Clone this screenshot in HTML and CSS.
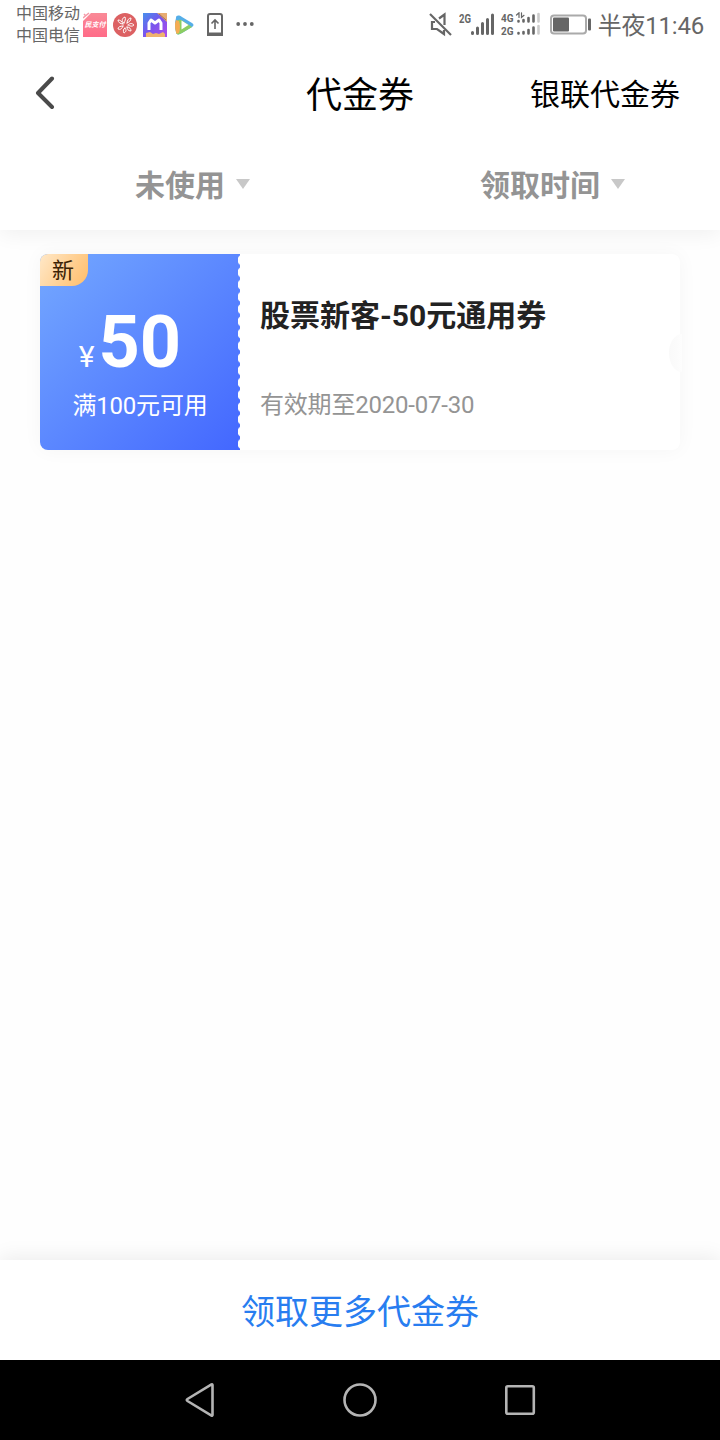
FILE: index.html
```html
<!DOCTYPE html>
<html lang="zh-CN">
<head>
  <meta charset="UTF-8">
  <title>代金券</title>
  <link rel="stylesheet" href="styles.css">
</head>
<body>
  <div class="screen">
    <!-- 状态栏 -->
    <div class="status-bar">
      <div class="carriers">
        <span>中国移动</span>
        <span>中国电信</span>
      </div>
      <div class="notices">
        <svg width="24" height="26" viewBox="0 0 24 26">
          <defs>
            <linearGradient id="pink" x1="0" y1="0" x2="0" y2="1">
              <stop offset="0" stop-color="#f98a97"></stop>
              <stop offset="1" stop-color="#ff6b88"></stop>
            </linearGradient>
          </defs>
          <path d="M8 1H24V25H0V9Z" fill="url(#pink)"></path>
          <path d="M0 6L6 1M1 2l2 2" stroke="#f59aa8" stroke-width="1.5"></path>
          <text class="pay-text" x="12" y="15" text-anchor="middle">民支付</text>
        </svg>
        <svg width="24" height="26" viewBox="0 0 24 26">
          <circle cx="12" cy="13" r="12" fill="#dc6163"></circle>
          <g fill="none" stroke="#fff" stroke-width="1" stroke-linecap="round">
            <path d="M11 11C8 9 9 6 12 5C13 7 12 9 11 11M14 11C14 8 16 6 18 6C18 9 16 10 14 11M15 13C17 11 19 11 21 13C19 15 17 14 15 13M14 15C17 15 18 17 18 19C15 19 14 17 14 15M12 16C14 18 13 20 11 21C10 19 10 17 12 16M10 14C9 17 7 18 5 17C5 15 7 14 10 14M10 12C7 12 5 10 5 8C7 8 9 9 10 12"></path>
          </g>
        </svg>
        <svg width="24" height="26" viewBox="0 0 24 26">
          <defs>
            <linearGradient id="violet" x1="0" y1="0" x2="1" y2="1">
              <stop offset="0" stop-color="#4790ec"></stop>
              <stop offset=".45" stop-color="#7656ed"></stop>
              <stop offset="1" stop-color="#b14bea"></stop>
            </linearGradient>
          </defs>
          <path d="M0 1H24V25H0Z" fill="url(#violet)"></path>
          <path d="M14 1H24V10Z" fill="#e8ad72"></path>
          <path d="M16 2l7 6" stroke="#a36d62"></path>
          <path d="M6 18V11L8 8L12 11L16 8L18 11V18" fill="none" stroke="#fff" stroke-width="3" stroke-linejoin="round"></path>
          <path d="M3 25v-4l4-1 3 2 3-1 3 1 4-2 2 2v3z" fill="#efb36d"></path>
        </svg>
        <svg class="player" width="20" height="20" viewBox="0 0 20 20">
          <path d="M1 3C1 0 4 0 7 2L17 8Q20 10 17 12L7 18C4 20 1 20 1 17Q-1 10 1 3Z" fill="#55aee8"></path>
          <path d="M3 5Q5 4 8 6L14 10L17 12L7 18C4 20 1 20 1 17Q0 10 3 5Z" fill="#8cce61"></path>
          <path d="M1 5L4 6Q6 12 4 18Q1 20 1 17Q-1 10 1 5Z" fill="#f5ad52"></path>
          <path d="M6.500 5.500L13.500 10L6.500 14.500Z" fill="#fff"></path>
        </svg>
        <svg width="16" height="24" viewBox="0 0 16 24">
          <path d="M3 1H13Q15 1 15 3V22H1V3Q1 1 3 1Z" fill="none" stroke="#666" stroke-width="2"></path>
          <path d="M1 21H15" stroke="#666" stroke-width="3"></path>
          <path d="M8 16V7M4.500 10.500L8 7L11.500 10.500" fill="none" stroke="#666" stroke-width="1.6"></path>
        </svg>
        <svg class="dots" width="20" height="4" viewBox="0 0 20 4">
          <circle cx="3.2" cy="2" r="1.9"></circle>
          <circle cx="10" cy="2" r="1.9"></circle>
          <circle cx="16.8" cy="2" r="1.9"></circle>
        </svg>
      </div>
      <div class="system">
        <svg width="24" height="26" viewBox="0 0 24 26">
          <path d="M6 10H3V17H8L15 22V18M10 6.500L15.500 2.500V13" fill="none" stroke="#666" stroke-width="2.2"></path>
          <path d="M1 2L22 23" stroke="#666" stroke-width="2.2"></path>
        </svg>
        <svg class="signal" width="36" height="26" viewBox="0 0 36 26">
          <text x="0" y="10.500" textLength="12" lengthAdjust="spacingAndGlyphs">2G</text>
          <path d="M13.500 20.500v1M18.500 16v5.500M23.500 11.500v10M28.500 7.500v14M33.500 3v18.500"></path>
        </svg>
        <svg class="signal double" width="39" height="26" viewBox="0 0 39 26">
          <text x="0" y="10" textLength="12.500" lengthAdjust="spacingAndGlyphs">4G</text>
          <text x="0" y="22.500" textLength="12.500" lengthAdjust="spacingAndGlyphs">2G</text>
          <path class="thin" d="M17.500 9v.5M22.500 8v1.500M27.500 6v3.500M32.500 3.500v6M17.500 21v.5M22.500 20v1.500M27.500 18v3.500M32.500 15.500v6"></path>
          <path class="arrows" d="M15.500 3L18 .8V5.500M20.500 .8V5.500L23 3.300"></path>
          <path class="thin faint" d="M37.500 2v7.500M37.500 14v7.500"></path>
        </svg>
        <svg class="battery" width="42" height="22" viewBox="0 0 42 22">
          <rect x="1" y="1.500" width="35" height="18" rx="3" fill="none" stroke="#aaa" stroke-width="2"></rect>
          <rect x="3" y="3.500" width="16" height="14" rx="1" fill="#666"></rect>
          <rect x="38" y="4.500" width="3" height="12" rx="1" fill="#666"></rect>
        </svg>
        <span class="clock">半夜11:46</span>
      </div>
    </div>

    <!-- 标题栏 -->
    <div class="top">
      <div class="nav">
        <svg class="back" width="20" height="34" viewBox="0 0 20 34">
          <path d="M17 2.500L3 17L17 31" fill="none" stroke="#4a4a4a" stroke-width="4" stroke-linecap="round" stroke-linejoin="round"></path>
        </svg>
        <h1 class="title">代金券</h1>
        <span class="nav-link">银联代金券</span>
      </div>
      <div class="filters">
        <div class="filter"><span>未使用</span><i class="caret"></i></div>
        <div class="filter"><span>领取时间</span><i class="caret"></i></div>
      </div>
    </div>

    <!-- 券列表 -->
    <div class="list">
      <div class="coupon">
        <div class="amount">
          <span class="badge">新</span>
          <div class="price"><span class="yen">¥</span><span class="num">50</span></div>
          <div class="limit">满100元可用</div>
        </div>
        <div class="info">
          <h2 class="name">股票新客-50元通用券</h2>
          <div class="date">有效期至2020-07-30</div>
          <i class="notch"></i>
        </div>
      </div>
    </div>

    <div class="more">领取更多代金券</div>

    <!-- 系统导航键 -->
    <div class="keys">
      <svg width="40" height="40" viewBox="0 0 40 40"><path d="M32.500 5V35Q32.500 36 31.500 35.500L7.500 21Q6 20 7.500 19L31.500 4.500Q32.500 4 32.500 5Z"></path></svg>
      <svg width="40" height="40" viewBox="0 0 40 40"><circle cx="20" cy="20" r="15.500"></circle></svg>
      <svg width="40" height="40" viewBox="0 0 40 40"><rect x="6.300" y="6.300" width="27.500" height="27.500" rx="1.500"></rect></svg>
    </div>
  </div>
</body>
</html>
```
FILE: styles.css
```css
body {
  margin: 0;
  font-family: Roboto, "Noto Sans CJK SC", sans-serif;
  background: #fefefe;
}
svg {
  display: block;
  flex: none;
}
.screen {
  display: flex;
  flex-direction: column;
  width: 720px;
  height: 1440px;
  overflow: hidden;
}

/* 状态栏 */
.status-bar {
  position: relative;
  z-index: 1;
  display: flex;
  align-items: center;
  height: 50px;
  padding: 0 16px;
  background: #fff;
  color: #666;
}
.carriers {
  display: flex;
  flex-direction: column;
  width: 67px;
  font-size: 16px;
  line-height: 22px;
  white-space: nowrap;
}
.notices {
  display: flex;
  align-items: center;
  gap: 6px;
}
.pay-text {
  font-size: 7px;
  font-weight: bold;
  font-style: italic;
  fill: #fff;
}
.player {
  margin: 0 6px 0 2px;
}
.dots {
  margin: -2px 0 0 6px;
  fill: #666;
}
.system {
  display: flex;
  align-items: center;
  margin-left: auto;
}
.signal {
  margin-left: 6px;
  font-size: 12.5px;
  font-weight: bold;
  fill: #666;
}
.signal.double {
  font-size: 10.2px;
}
.signal path {
  fill: none;
  stroke: #666;
  stroke-width: 3;
  stroke-linecap: round;
}
.signal .thin {
  stroke-width: 2.6;
}
.signal .arrows {
  stroke-width: 1.2;
}
.signal .faint {
  stroke: #ccc;
}
.battery {
  margin: 0 6px 0 10px;
}
.clock {
  font-size: 24px;
  line-height: 48px;
  letter-spacing: -0.2px;
  padding-top: 1px;
}

/* 标题栏和筛选 */
.top {
  height: 180px;
  background: #fff;
  box-shadow: 0 4px 20px rgba(0, 0, 0, 0.06);
}
.nav {
  display: grid;
  grid-template-columns: 1fr auto 1fr;
  align-items: center;
  height: 86px;
  padding: 0 40px 0 35px;
}
.title {
  margin: 0;
  padding: 0 0 2px 5px;
  font-size: 36px;
  font-weight: normal;
}
.nav-link {
  justify-self: end;
  padding-bottom: 3px;
  font-size: 30px;
}
.filters {
  display: flex;
  height: 96px;
}
.filter {
  display: flex;
  flex: 1;
  align-items: center;
  justify-content: center;
  gap: 11px;
  padding-left: 25px;
  font-size: 30px;
  font-weight: bold;
  color: #949494;
}
.filter span {
  padding-bottom: 3px;
}
.filter .caret {
  border: 7px solid transparent;
  border-top: 10px solid #c8c8c8;
  border-bottom: 0;
}

/* 代金券 */
.list {
  flex: 1;
  padding: 24px 40px;
}
.coupon {
  display: flex;
  height: 196px;
  border-radius: 8px;
  background: #fff;
  box-shadow: 0 0 20px rgba(0, 0, 0, 0.04);
}
.amount {
  position: relative;
  box-sizing: border-box;
  width: 200px;
  padding-top: 51px;
  border-radius: 8px 0 0 8px;
  color: #fff;
  text-align: center;
  /* 右侧锯齿边 */
  background:
    radial-gradient(ellipse 2.5px 5px at 100% 50%, #fff 75%, transparent) right top / 6px 12.25px repeat-y,
    linear-gradient(135deg, #74a8ff, #4367ff);
}
.badge {
  position: absolute;
  left: 0;
  top: 0;
  width: 48px;
  height: 32px;
  box-sizing: border-box;
  padding-right: 2px;
  border-radius: 8px 0 16px 0;
  background: linear-gradient(120deg, #ffe8c8, #ffbd69);
  color: #3c2205;
  font-size: 22px;
  line-height: 34px;
}
.price {
  display: flex;
  align-items: baseline;
  justify-content: center;
  gap: 4px;
  height: 75px;
  padding-right: 20px;
  line-height: 76px;
}
.yen {
  font-size: 30px;
}
.num {
  font-size: 72px;
  font-weight: bold;
}
.limit {
  font-size: 24px;
  line-height: 52px;
  letter-spacing: -0.2px;
}
.info {
  position: relative;
  flex: 1;
  padding: 40px 20px 0;
}
.name {
  margin: 0;
  font-size: 30px;
  line-height: 44px;
  color: #222;
}
.date {
  margin-top: 49px;
  font-size: 24px;
  line-height: 36px;
  letter-spacing: -0.2px;
  color: #949494;
}
.notch {
  position: absolute;
  right: -2px;
  top: 80px;
  width: 13px;
  height: 38px;
  border-radius: 13px 0 0 13px / 19px 0 0 19px;
  background: linear-gradient(90deg, #f9f9f9, #fdfdfd);
}

.more {
  height: 100px;
  background: #fff;
  box-shadow: 0 -2px 20px rgba(0, 0, 0, 0.08);
  color: #287df0;
  font-size: 34px;
  line-height: 104px;
  text-align: center;
}
.keys {
  display: flex;
  align-items: center;
  justify-content: center;
  gap: 120px;
  height: 80px;
  background: #000;
}
.keys svg {
  fill: none;
  stroke: #b4b4b4;
  stroke-width: 2.6;
}
```
